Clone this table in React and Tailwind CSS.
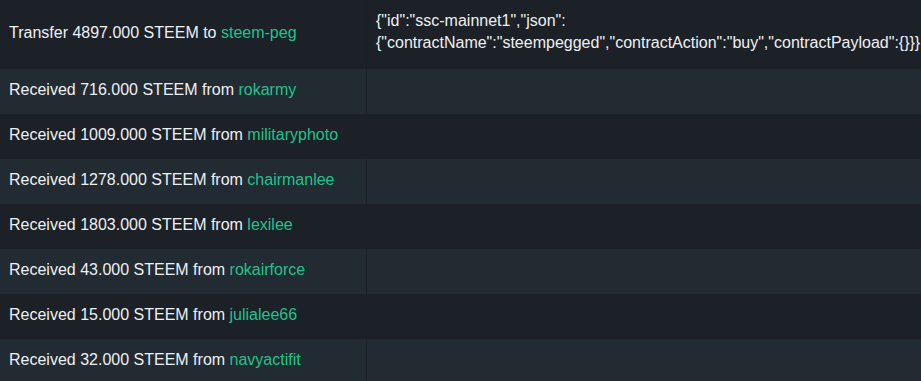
import React from 'react';

const rows = [
    { kind: 'Received', amount: '716.000', user: 'rokarmy' },
    { kind: 'Received', amount: '1009.000', user: 'militaryphoto' },
    { kind: 'Received', amount: '1278.000', user: 'chairmanlee' },
    { kind: 'Received', amount: '1803.000', user: 'lexilee' },
    { kind: 'Received', amount: '43.000', user: 'rokairforce' },
    { kind: 'Received', amount: '15.000', user: 'julialee66' },
    { kind: 'Received', amount: '32.000', user: 'navyactifit' },
];

const App = () => {
    return (
        <div className="w-[921px] h-[381px] overflow-hidden bg-[#1c2127] text-[16px] leading-6 text-[#eef0f2] font-['Liberation_Sans',Arial,sans-serif]">
            {/* transfer row with memo */}
            <div className="flex h-[69px] bg-[#1c2127]">
                <div className="w-[367px] shrink-0 flex items-center pl-[9px] pb-[4px] border-r border-[#1a1f24]">
                    <span>
                        Transfer 4897.000 STEEM to <span className="text-[#22c28c]">steem-peg</span>
                    </span>
                </div>
                <div className="flex-1 pl-[9px] pt-[10px] leading-[22px] whitespace-nowrap">
                    <div>{'{"id":"ssc-mainnet1","json":'}</div>
                    <div>{'{"contractName":"steempegged","contractAction":"buy","contractPayload":{}}}'}</div>
                </div>
            </div>

            {rows.map((row, i) => (
                <div
                    key={row.user}
                    className={`flex h-[45px] ${i % 2 === 0 ? 'bg-[#222a32]' : 'bg-[#1c2127]'}`}
                >
                    <div className="w-[367px] shrink-0 flex items-center pl-[9px] pb-[4px] border-r border-[#1c2127]">
                        <span>
                            {row.kind} {row.amount} STEEM from <span className="text-[#22c28c]">{row.user}</span>
                        </span>
                    </div>
                    <div className="flex-1"></div>
                </div>
            ))}
        </div>
    );
};

export default App;
